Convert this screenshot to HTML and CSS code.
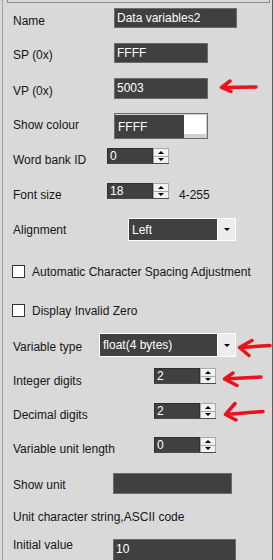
FILE: index.html
```html
<!DOCTYPE html>
<html>
<head>
<meta charset="utf-8">
<link rel="stylesheet" href="styles.css">
</head>
<body>
<div class="panel">
  <div class="topbox"></div>

  <div class="row r1 c114"><span class="lbl lo6">Name</span><div class="tb w123">Data variables2</div></div>
  <div class="row r2 c114"><span class="lbl lo5">SP (0x)</span><div class="tb w94">FFFF</div></div>
  <div class="row r3 c114"><span class="lbl lo6">VP (0x)</span><div class="tb w94">5003</div></div>
  <div class="row r4 c114"><span class="lbl lo5">Show colour</span>
    <div class="cbox"><div class="cf">FFFF</div><div class="sw"></div></div></div>
  <div class="row r5 c107"><span class="lbl lo5">Word bank ID</span>
    <div class="spin"><div class="sf">0</div><div class="sb"><span class="up"></span><span class="dn"></span></div></div></div>
  <div class="row r6 c107"><span class="lbl lo5">Font size</span>
    <div class="spin"><div class="sf">18</div><div class="sb"><span class="up"></span><span class="dn"></span></div></div>
    <span class="hint lo5">4-255</span></div>
  <div class="row r7 c128"><span class="lbl lo5">Alignment</span>
    <div class="dd w108"><div class="df">Left</div><div class="db"><span class="tri"></span></div></div></div>
  <div class="row r8"><span class="chk"></span><span class="clbl">Automatic Character Spacing Adjustment</span></div>
  <div class="row r9"><span class="chk"></span><span class="clbl">Display Invalid Zero</span></div>
  <div class="row r10 c99"><span class="lbl lo7">Variable type</span>
    <div class="dd w137"><div class="df">float(4 bytes)</div><div class="db"><span class="tri"></span></div></div></div>
  <div class="row r11 c154"><span class="lbl lo6">Integer digits</span>
    <div class="spin"><div class="sf">2</div><div class="sb"><span class="up"></span><span class="dn"></span></div></div></div>
  <div class="row r12 c154"><span class="lbl lo5">Decimal digits</span>
    <div class="spin"><div class="sf">2</div><div class="sb"><span class="up"></span><span class="dn"></span></div></div></div>
  <div class="row r13 c154"><span class="lbl lo5">Variable unit length</span>
    <div class="spin"><div class="sf">0</div><div class="sb"><span class="up"></span><span class="dn"></span></div></div></div>
  <div class="row r14 c113"><span class="lbl lo5">Show unit</span><div class="tb w119"></div></div>
  <div class="row r15"><span class="lbl">Unit character string,ASCII code</span></div>
  <div class="row r16 c113"><span class="lbl">Initial value</span><div class="tb w123 tb-low">10</div></div>

  <svg class="marks" width="273" height="560" viewBox="0 0 273 560">
    <g fill="none" stroke="#e8131b" stroke-width="3.5" stroke-linecap="round" stroke-linejoin="round">
      <path d="M256 87 L222 87.5 M230 81 L221.5 87.5 L231 91.5"/>
      <path d="M270 345.5 L240 347.5 M252 340.5 L239.5 347.5 L249 355.5"/>
      <path d="M261 377 L225 379 M233 373 L224.5 379 L237 385.5"/>
      <path d="M263 411.5 L226 414.5 M235 403.5 L225.5 414.5 L236 420"/>
    </g>
  </svg>
</div>
</body>
</html>
```

FILE: styles.css
```css
html, body {
  margin: 0;
  padding: 0;
  background: #d9d9d9;
}
body {
  font-family: "Liberation Sans", Arial, sans-serif;
  font-size: 12px;
  line-height: 14px;
  color: #161616;
  width: 273px;
  height: 560px;
  overflow: hidden;
}
.panel {
  position: relative;
  margin-left: 2px;
  width: 269px;
  height: 560px;
  border-left: 1px solid #a3a3a3;
  border-right: 1px solid #5c5c5c;
  background: #d9d9d9;
  overflow: hidden;
}
.topbox {
  margin-left: 4px;
  width: 261px;
  height: 2px;
  border: 1px solid #8a8a8a;
  border-top: none;
}
.row {
  display: flex;
  align-items: flex-start;
  padding-left: 10px;
  white-space: nowrap;
}
.lbl { flex: none; }
.c114 .lbl { width: 101px; }
.c107 .lbl { width: 94px; }
.c128 .lbl { width: 115px; }
.c99 .lbl { width: 86px; }
.c154 .lbl { width: 141px; }
.c113 .lbl { width: 100px; }
.lo5 { margin-top: 5px; }
.lo6 { margin-top: 6px; }
.lo7 { margin-top: 7px; }

.r1 { margin-top: 5px; height: 20px; }
.r2 { margin-top: 15px; height: 20px; }
.r3 { margin-top: 15px; height: 21px; }
.r4 { margin-top: 14px; height: 26px; }
.r5 { margin-top: 9px; height: 16px; }
.r6 { margin-top: 19px; height: 16px; }
.r7 { margin-top: 19px; height: 23px; }
.r8 { margin-top: 24px; height: 13px; padding-left: 9px; }
.r9 { margin-top: 26px; height: 13px; padding-left: 9px; }
.r10 { margin-top: 16px; height: 24px; }
.r11 { margin-top: 11px; height: 16px; }
.r12 { margin-top: 19px; height: 16px; }
.r13 { margin-top: 18px; height: 17px; }
.r14 { margin-top: 19px; height: 21px; }
.r15 { margin-top: 16px; height: 14px; }
.r16 { margin-top: 14px; height: 24px; }

.tb {
  box-sizing: border-box;
  height: 100%;
  background: #404040;
  border: 1px solid #6c6c6c;
  color: #ffffff;
  padding: 2px 2px 0;
}
.tb-low { margin-top: 1px; }
.w123 { width: 123px; }
.w94 { width: 94px; }
.w119 { width: 119px; }
.w108 { width: 108px; }
.w137 { width: 137px; }

.cbox {
  box-sizing: border-box;
  width: 94px;
  height: 26px;
  border: 1px solid #6c6c6c;
  background: #d0d0d0;
  display: flex;
  align-items: flex-start;
  padding: 1px 1px 0 0;
}
.cf {
  width: 70px;
  box-sizing: border-box;
  background: #404040;
  color: #fff;
  padding: 5px 0 0 3px;
  border-bottom: 4px solid #404040;
  height: 23px;
}
.sw {
  width: 22px;
  height: 19px;
  background: #ffffff;
}

.spin {
  display: flex;
  height: 16px;
  width: 62px;
  border-bottom: 1px solid #4a4a4a;
  box-sizing: border-box;
}
.sf {
  width: 46px;
  box-sizing: border-box;
  background: #404040;
  color: #fff;
  padding: 0 0 0 2px;
  line-height: 14px;
  border: 1px solid #2f2f2f;
  border-bottom: none;
}
.sb {
  width: 16px;
  box-sizing: border-box;
  background: #f2f2f2;
  border: 1px solid #a9a9a9;
  border-bottom: none;
  display: flex;
  flex-direction: column;
}
.sb .up, .sb .dn {
  flex: 1;
  display: flex;
  align-items: center;
  justify-content: center;
}
.sb .up { border-bottom: 1px solid #a9a9a9; }
.sb .up::after {
  content: "";
  border-left: 3px solid transparent;
  border-right: 3px solid transparent;
  border-bottom: 3px solid #000;
}
.sb .dn::after {
  content: "";
  border-left: 3px solid transparent;
  border-right: 3px solid transparent;
  border-top: 3px solid #000;
}
.hint { margin-left: 10px; }

.dd {
  box-sizing: border-box;
  height: 100%;
  border: 1px solid #ffffff;
  display: flex;
}
.df {
  flex: 1;
  background: #404040;
  color: #fff;
  padding: 4px 0 0 3px;
  border-right: 1px solid #ffffff;
}
.db {
  width: 17px;
  background: #ececec;
  display: flex;
  align-items: center;
  justify-content: center;
}
.tri {
  border-left: 3px solid transparent;
  border-right: 3px solid transparent;
  border-top: 3px solid #000;
}

.chk {
  box-sizing: border-box;
  flex: none;
  width: 13px;
  height: 13px;
  background: #ffffff;
  border: 1px solid #333333;
}
.clbl { margin-left: 7px; }

.marks {
  position: absolute;
  left: -3px;
  top: 0;
  pointer-events: none;
}
```
